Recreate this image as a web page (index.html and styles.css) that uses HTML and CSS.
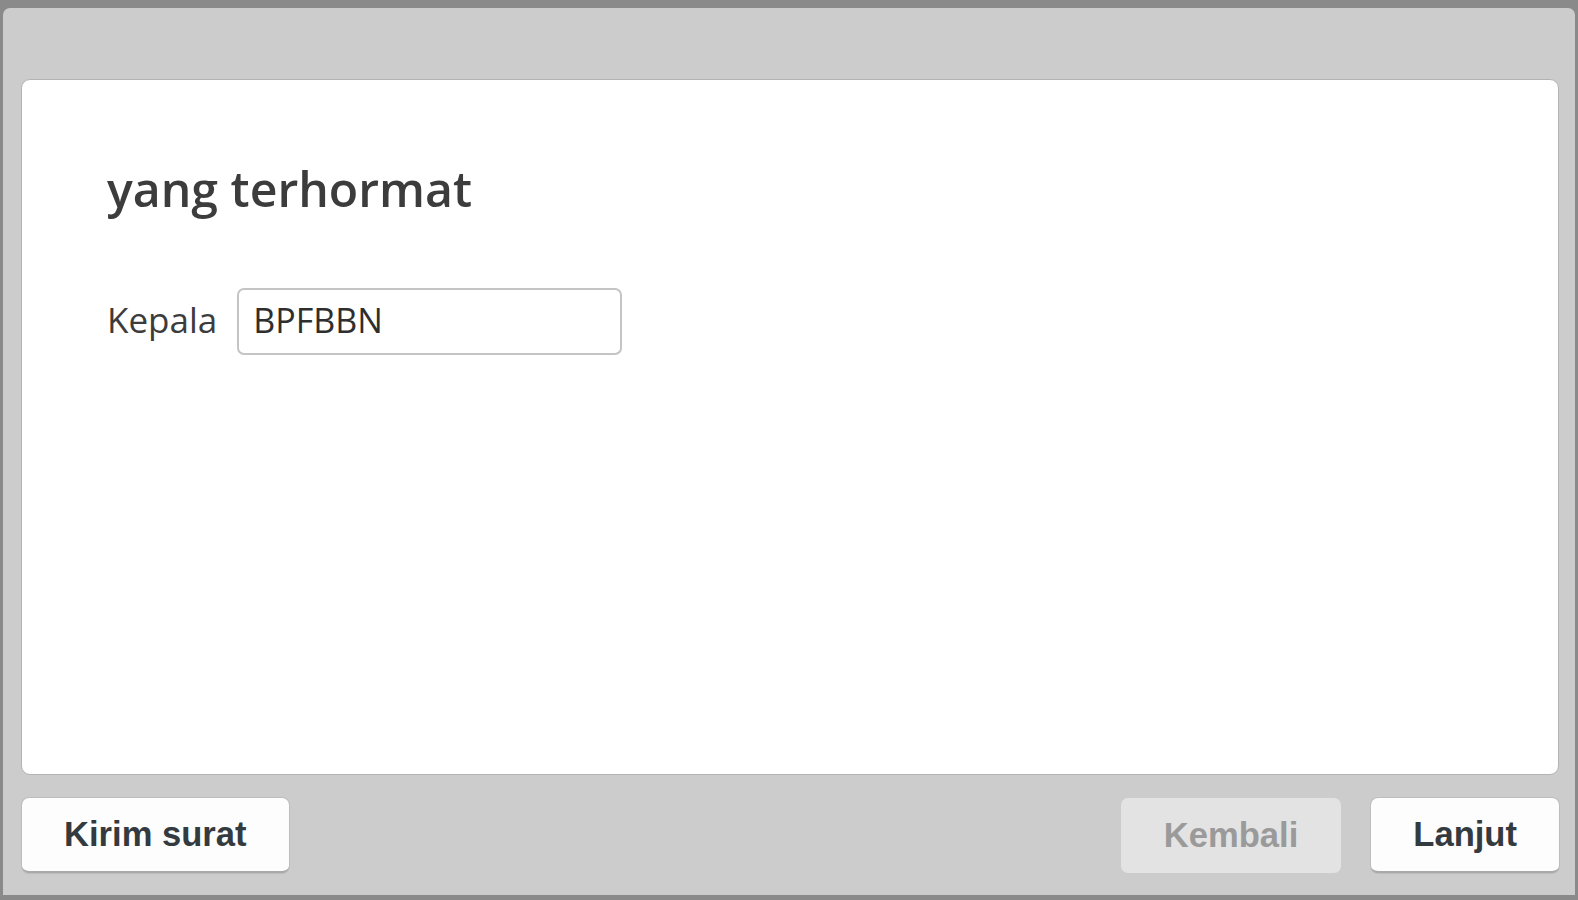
FILE: index.html
```html
<!DOCTYPE html>
<html>
<head>
<meta charset="utf-8">
<link rel="stylesheet" href="styles.css">
</head>
<body>
<div class="window">
  <div class="card">
    <h1 class="title">yang terhormat</h1>
    <div class="field">
      <label class="label">Kepala</label>
      <div class="input">BPFBBN</div>
    </div>
  </div>
  <div class="actions">
    <button class="btn">Kirim surat</button>
    <div class="spacer"></div>
    <button class="btn disabled">Kembali</button>
    <button class="btn">Lanjut</button>
  </div>
</div>
</body>
</html>
```
FILE: styles.css
```css
html, body {
  margin: 0;
  padding: 0;
  width: 1578px;
  height: 900px;
  overflow: hidden;
  background: #8a8a8a;
}
body {
  padding: 8px 3px 5px 3px;
  box-sizing: border-box;
}
.window {
  height: 887px;
  background: #cccccc;
  border-radius: 7px 7px 0 0;
  padding: 71px 16px 0 18px;
  box-sizing: border-box;
  display: flex;
  flex-direction: column;
}
.card {
  height: 696px;
  background: #ffffff;
  border: 1px solid #b3b3b3;
  border-radius: 9px;
  box-sizing: border-box;
  padding: 79px 0 0 85px;
}
.title {
  margin: 0;
  font-family: "Open Sans", sans-serif;
  font-weight: 600;
  font-size: 48.2px;
  line-height: 58px;
  color: #3c3c3c;
}
.field {
  display: flex;
  align-items: center;
  margin-top: 71px;
}
.label {
  font-family: "Open Sans", sans-serif;
  font-size: 35px;
  line-height: 46px;
  padding-bottom: 3px;
  color: #3c3c3c;
  margin-right: 20px;
}
.input {
  width: 385px;
  height: 67px;
  box-sizing: border-box;
  border: 2px solid #c4c4c4;
  border-radius: 7px;
  padding-left: 14px;
  font-family: "Open Sans", sans-serif;
  font-size: 34px;
  line-height: 61px;
  color: #2e2e2e;
}
.actions {
  display: flex;
  align-items: center;
  margin-top: 23px;
  padding-left: 1px;
}
.spacer {
  flex: 1;
}
.btn {
  height: 75px;
  padding: 0 42px;
  background: #fdfdfd;
  border: none;
  border-bottom: 2px solid #a9a9a9;
  box-shadow: 0 0 0 1px #bdbdbd;
  border-radius: 7px;
  font-family: "Liberation Sans", Arial, sans-serif;
  font-weight: bold;
  font-size: 34.6px;
  color: #333a40;
}
.btn.disabled {
  background: #e3e3e3;
  color: #9a9a9a;
  border-bottom: none;
  box-shadow: none;
  margin-right: 30px;
  padding: 0 43px;
}
```
